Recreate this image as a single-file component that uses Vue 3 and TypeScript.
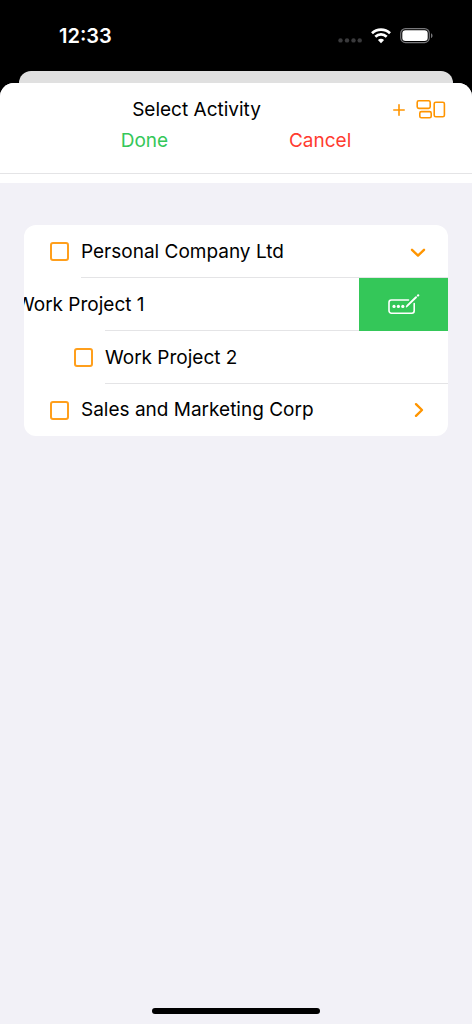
<script setup lang="ts">
import { ref } from 'vue'

interface Activity {
  id: string
  name: string
  child: boolean
  disclosure?: 'open' | 'closed'
  swiped?: boolean
  checked: boolean
}

const activities = ref<Activity[]>([
  { id: 'personal', name: 'Personal Company Ltd', child: false, disclosure: 'open', checked: false },
  { id: 'work-1', name: 'Work Project 1', child: true, swiped: true, checked: false },
  { id: 'work-2', name: 'Work Project 2', child: true, checked: false },
  { id: 'sales', name: 'Sales and Marketing Corp', child: false, disclosure: 'closed', checked: false },
])

const toggle = (item: Activity) => {
  item.disclosure = item.disclosure === 'open' ? 'closed' : 'open'
}
</script>

<template>
  <div class="screen">
    <div class="status">
      <span class="time">12:33</span>
      <div class="indicators">
        <svg width="24" height="6" viewBox="0 0 24 6" fill="#3a3a3c">
          <circle cx="2.5" cy="2.4" r="2.2" /><circle cx="9" cy="2.4" r="2.2" />
          <circle cx="15.5" cy="2.4" r="2.2" /><circle cx="21.7" cy="2.4" r="2.2" />
        </svg>
        <svg class="wifi" width="20" height="16" viewBox="0 0 20 16" fill="none" stroke="#fff" stroke-width="2.7">
          <path d="M1 5.2C6 .3 14 .3 19 5.2" />
          <path d="M4.3 8.7C7.6 5.6 12.4 5.6 15.7 8.7" />
          <path d="M10 15.2L6.9 12C8.7 10.4 11.3 10.4 13.1 12Z" fill="#fff" stroke="none" />
        </svg>
        <svg class="battery" width="34" height="16" viewBox="0 0 34 16">
          <rect x=".7" y=".6" width="28.6" height="14" rx="4.8" fill="none" stroke="#77777a" stroke-width="1.2" />
          <rect x="2.3" y="2.2" width="25.4" height="10.8" rx="3.2" fill="#fff" />
          <path d="M31 5.2C33 6 33 9.2 31 10Z" fill="#77777a" />
        </svg>
      </div>
    </div>

    <div class="behind"></div>

    <main class="sheet">
      <header class="header">
        <div class="title-row">
          <h1>Select Activity</h1>
          <button class="icon" type="button" aria-label="Add">
            <svg width="12" height="12" viewBox="0 0 12 12" fill="none" stroke="#ff9500" stroke-width="1.6" stroke-linecap="round">
              <path d="M6 .8V11.2M.8 6H11.2" />
            </svg>
          </button>
          <button class="icon" type="button" aria-label="Layout">
            <svg width="30" height="20" viewBox="0 0 30 20" fill="none" stroke="#ff9500" stroke-width="1.6">
              <rect x="1.2" y=".8" width="13" height="7.6" rx="1.6" />
              <rect x="3.8" y="11.6" width="11.4" height="6.2" rx="1.6" />
              <rect x="18.2" y="2.2" width="10.2" height="14.6" rx="1.6" />
            </svg>
          </button>
        </div>
        <div class="actions">
          <button class="done" type="button">Done</button>
          <button class="cancel" type="button">Cancel</button>
        </div>
      </header>

      <ul class="list">
        <li v-for="item in activities" :key="item.id" :class="{ child: item.child, swiped: item.swiped }">
          <div class="content">
            <label>
              <input v-model="item.checked" type="checkbox" />
              <span>{{ item.name }}</span>
            </label>
            <button
              v-if="item.disclosure"
              class="icon"
              type="button"
              :aria-label="`Toggle ${item.name}`"
              @click="toggle(item)"
            >
              <svg width="18" height="18" viewBox="0 0 18 18" fill="none" stroke="#ff9500" stroke-width="2.4" stroke-linecap="round" stroke-linejoin="round">
                <path v-if="item.disclosure === 'open'" d="M2 6.8L8 12.6L14 6.8" />
                <path v-else d="M6 3.2L12 9L6 14.8" />
              </svg>
            </button>
          </div>
          <button v-if="item.swiped" class="edit" type="button" aria-label="Rename">
            <svg width="32" height="22" viewBox="0 0 32 22" fill="none" stroke="#fff" stroke-width="1.6" stroke-linecap="round">
              <path d="M20.5 6H3.4A2.4 2.4 0 0 0 1 8.4V16.8A2.4 2.4 0 0 0 3.4 19.2H23.8A2.4 2.4 0 0 0 26.2 16.8V9.5" />
              <path d="M19.4 11.6L28 3.3" stroke-width="2" />
              <path d="M30 1.5L30.2 1.3" stroke-width="2.2" />
              <path d="M18.4 12.8L19.4 11.6" stroke-width="1.2" />
              <g fill="#fff" stroke="none">
                <circle cx="6" cy="12.4" r="1.6" /><circle cx="10.4" cy="12.4" r="1.6" /><circle cx="14.8" cy="12.4" r="1.6" />
              </g>
            </svg>
          </button>
        </li>
      </ul>

      <div class="home"></div>
    </main>
  </div>
</template>

<style>
body {
  margin: 0;
  background: #000;
}
</style>

<style scoped>
.screen {
  display: flex;
  flex-direction: column;
  min-height: 100vh;
  background: #000;
  color: #000;
  font-family: Inter, "Liberation Sans", sans-serif;
  font-size: 19px;
  line-height: 24px;
}

.status {
  display: flex;
  align-items: center;
  justify-content: space-between;
  height: 71px;
  box-sizing: border-box;
  padding: 0 38px 0 59px;
}

.time {
  color: #fff;
  font-size: 20px;
  font-weight: 600;
}

.indicators {
  display: flex;
  align-items: center;
  gap: 9px;
}

.indicators svg:first-child {
  margin-top: 10px;
}

.behind {
  height: 32px;
  margin: 0 19px;
  border-radius: 12px 12px 0 0;
  background: #e0e0e0;
}

.sheet {
  display: flex;
  flex: 1;
  flex-direction: column;
  margin-top: -20px;
  overflow: hidden;
  border-radius: 14px 14px 0 0;
  background: #f2f1f7;
}

button {
  padding: 0;
  border: 0;
  background: none;
  font: inherit;
  cursor: pointer;
}

.icon {
  display: flex;
}

.header {
  padding-top: 11px;
  background: #fff;
  border-bottom: 9px solid #fff;
}

.title-row {
  display: flex;
  align-items: center;
  gap: 11px;
  height: 32px;
  padding-right: 26px;
}

h1 {
  flex: 1;
  margin: 0 -11px 0 0;
  font-size: 19px;
  font-weight: 400;
  text-align: center;
}

.actions {
  display: flex;
  justify-content: space-evenly;
  padding: 3px 0 20px;
  border-bottom: 1px solid #e4e4e6;
}

.done {
  color: #34c759;
}

.cancel {
  color: #ff3b30;
}

.list {
  margin: 42px 24px 0;
  padding: 0;
  overflow: hidden;
  border-radius: 12px;
  background: #fff;
  list-style: none;
}

li {
  position: relative;
  display: flex;
  height: 53px;
}

li:last-child {
  height: 52px;
}

li:not(:last-child)::after {
  position: absolute;
  right: 0;
  bottom: 0;
  left: 57px;
  height: 1px;
  background: #e4e4e6;
  content: "";
}

li.child::after {
  left: 81px;
}

.content {
  display: flex;
  flex: none;
  align-items: center;
  justify-content: space-between;
  box-sizing: border-box;
  width: 100%;
  padding: 0 20px 0 26px;
}

.child .content {
  padding-left: 50px;
}

.swiped .content {
  margin-left: -89px;
}

label {
  display: flex;
  align-items: center;
  gap: 12px;
}

input {
  width: 19px;
  height: 19px;
  margin: 0;
  appearance: none;
  border: 2px solid #ff9f1c;
  border-radius: 3px;
}

input:checked {
  background: #ff9500;
}

.edit {
  display: flex;
  flex: none;
  align-items: center;
  justify-content: center;
  z-index: 1;
  width: 89px;
  background: #34c759;
}

.home {
  width: 168px;
  height: 6px;
  margin: auto auto 10px;
  border-radius: 3px;
  background: #000;
}
</style>
